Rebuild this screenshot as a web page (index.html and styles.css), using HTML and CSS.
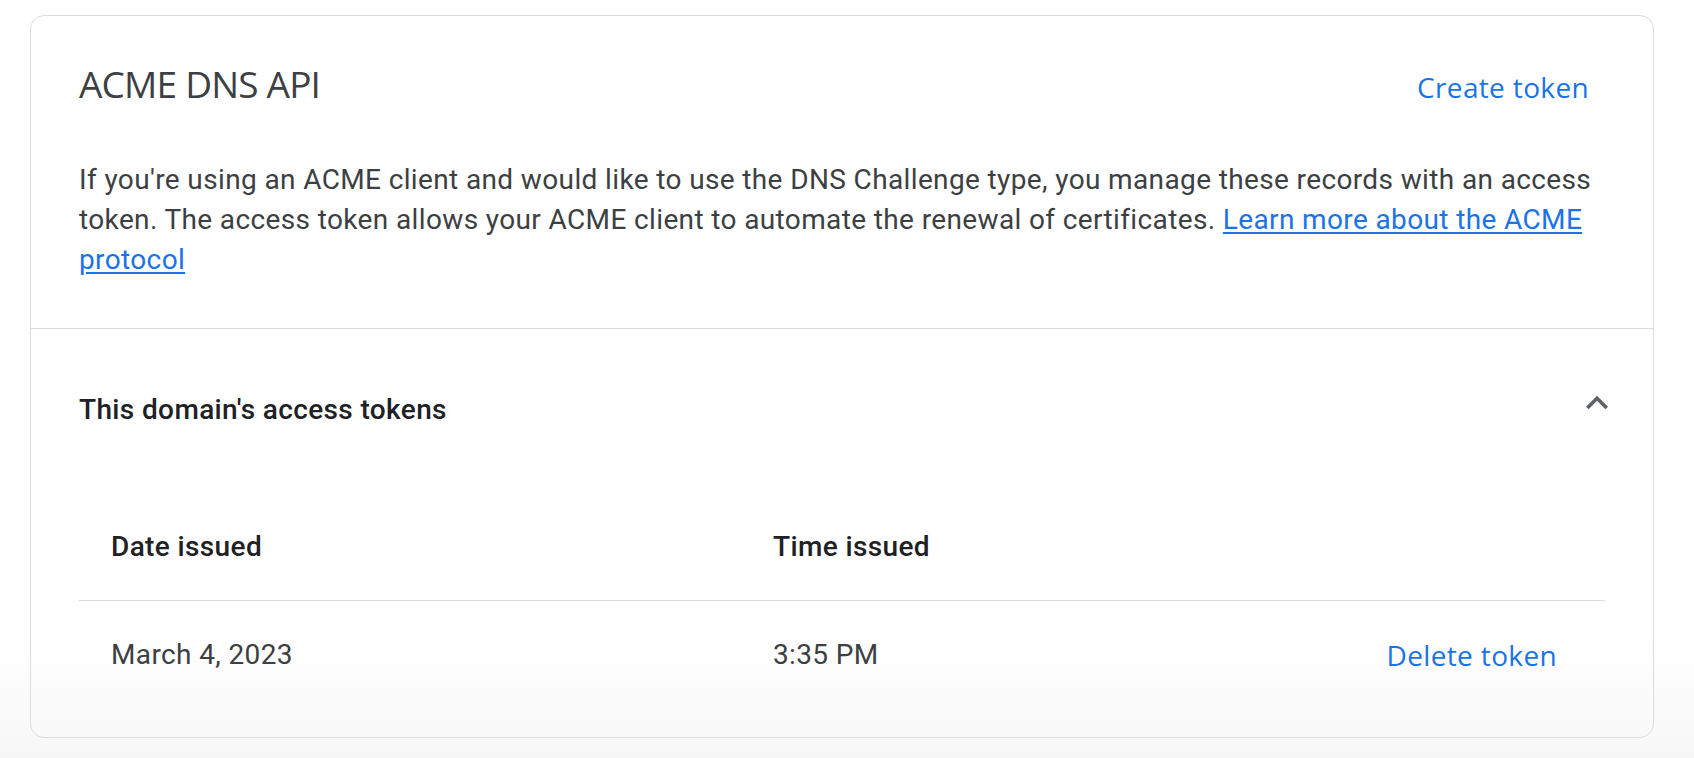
FILE: index.html
```html
<!DOCTYPE html>
<html lang="en">
<head>
<meta charset="utf-8">
<title>ACME DNS API</title>
<link rel="stylesheet" href="styles.css">
</head>
<body>
  <section class="card">
    <div class="intro">
      <div class="intro-head">
        <h2 class="title">ACME DNS API</h2>
        <button class="text-btn create-btn" type="button">Create token</button>
      </div>
      <p class="desc">If you're using an ACME client and would like to use the DNS Challenge type, you manage these records with an access token. The access token allows your ACME client to automate the renewal of certificates. <a class="link" href="#">Learn more about the ACME protocol</a></p>
    </div>
    <div class="tokens">
      <div class="tokens-head">
        <h3 class="tokens-title">This domain's access tokens</h3>
        <button class="chevron-btn" type="button" aria-label="Collapse">
          <svg width="44" height="44" viewBox="0 0 24 24"><path d="M12 8l-6 6 1.41 1.41L12 10.83l4.59 4.58L18 14z" fill="#5f6368"/></svg>
        </button>
      </div>
      <div class="table">
        <div class="cell th">Date issued</div>
        <div class="cell th">Time issued</div>
        <div class="cell th"></div>
        <div class="cell td">March 4, 2023</div>
        <div class="cell td">3:35 PM</div>
        <div class="cell td action"><button class="text-btn delete-btn" type="button">Delete token</button></div>
      </div>
    </div>
  </section>
</body>
</html>
```

FILE: styles.css
```css
html, body {
  margin: 0;
  padding: 0;
}

body {
  min-height: 758px;
  background: linear-gradient(to bottom, #ffffff 0px, #ffffff 640px, #f7f7f8 758px);
  font-family: Roboto, "Liberation Sans", Arial, sans-serif;
  color: #3c4043;
  letter-spacing: 0.37px;
  overflow: hidden;
}

.card {
  margin: 15px 40px 0 30px;
  border: 1px solid #dadce0;
  border-radius: 14px;
  background: transparent;
}

.intro {
  padding: 44px 48px 48px;
  border-bottom: 1px solid #dadce0;
}

.intro-head {
  display: flex;
  align-items: baseline;
  justify-content: space-between;
}

.title {
  margin: 0;
  font-family: "Google Sans", "Open Sans", sans-serif;
  font-weight: 400;
  font-size: 37px;
  line-height: 48px;
  letter-spacing: -0.8px;
  color: #3c4043;
}

.text-btn {
  border: 0;
  background: none;
  padding: 0;
  font-family: "Google Sans", "Open Sans", sans-serif;
  font-weight: 500;
  font-size: 28px;
  line-height: 40px;
  letter-spacing: 0.35px;
  color: #1a73e8;
  cursor: pointer;
}

.create-btn {
  padding: 0 16px;
}

.desc {
  margin: 52px 0 0;
  font-size: 28px;
  line-height: 40px;
  color: #3c4043;
}

.link {
  color: #1a73e8;
  text-decoration: underline;
  text-underline-offset: 3px;
}

.tokens {
  padding: 0 48px 62px;
}

.tokens-head {
  display: flex;
  justify-content: space-between;
  align-items: flex-start;
  padding: 61px 0 48px;
}

.tokens-title {
  margin: 0;
  font-size: 28px;
  line-height: 40px;
  font-weight: 500;
  color: #202124;
}

.chevron-btn {
  border: 0;
  background: none;
  padding: 0;
  width: 44px;
  height: 44px;
  margin: -9px -14px 0 0;
  display: flex;
  cursor: pointer;
}

.table {
  display: grid;
  grid-template-columns: 662px 1fr auto;
}

.cell {
  font-size: 28px;
  line-height: 40px;
  padding: 0 32px;
}

.th {
  padding-top: 49px;
  padding-bottom: 33px;
  border-bottom: 1px solid #dadce0;
  font-weight: 500;
  color: #202124;
}

.td {
  padding-top: 34px;
  padding-bottom: 0;
  color: #3c4043;
}

.action {
  padding-right: 48px;
  display: flex;
  justify-content: flex-end;
}
```
